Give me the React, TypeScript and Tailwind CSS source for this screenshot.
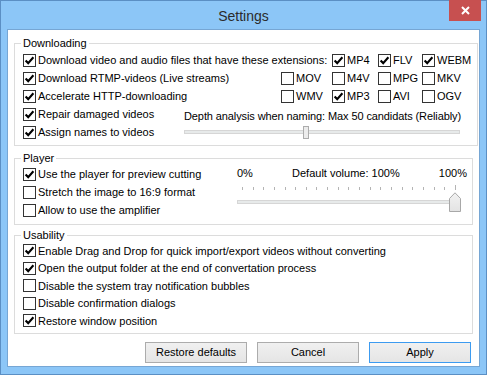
import React from "react";

function Box({ checked }: { checked?: boolean }) {
  return (
    <span className="w-[13px] h-[13px] shrink-0 border border-[#333333] bg-white flex items-center justify-center">
      {checked && (
        <svg width="11" height="11" viewBox="0 0 11 11">
          <path d="M1.6 5.4 L4.2 8.1 L9.4 2.2" stroke="#000" strokeWidth="2.1" fill="none" />
        </svg>
      )}
    </span>
  );
}

function Cb({ label, checked, className = "h-[18px]" }: { label: string; checked?: boolean; className?: string }) {
  return (
    <label className={`flex items-center gap-[2px] whitespace-nowrap ${className}`}>
      <Box checked={checked} />
      <span>{label}</span>
    </label>
  );
}

const TICKS = Array.from({ length: 21 }, (_, i) => i);

export default function App() {
  return (
    <div className="w-[487px] h-[375px] bg-[#8cc6f7] border border-[#5b8fc4] flex flex-col font-['Liberation_Sans',Arial,sans-serif] text-[11px] leading-[14px] text-black">
      {/* title bar */}
      <div className="relative h-[28px] flex items-center justify-center">
        <span className="text-[14px] text-[#2b2b2b] pt-[1px]">Settings</span>
        <div className="absolute top-[-1px] right-[5px] w-[32px] h-[21px] bg-[#c75050] flex items-center justify-center">
          <svg width="9" height="9" viewBox="0 0 9 9">
            <path d="M1 1 L8 8 M8 1 L1 8" stroke="#fff" strokeWidth="2" />
          </svg>
        </div>
      </div>

      {/* client */}
      <div className="mx-[6px] mb-[7px] flex-1 bg-white border border-[#76a6d4] flex flex-col">
        {/* Downloading */}
        <fieldset className="ml-[6px] mt-[6px] w-[464px] border border-[#dcdcdc] pl-[6px] pb-[4px]">
          <legend className="px-[2px] leading-[14px]">Downloading</legend>
          <div className="pl-[2px] pt-[1px]">
            <div className="grid grid-cols-[258px_51px_46px_44px_1fr]">
              <Cb className="h-[18px] col-span-2" checked label="Download video and audio files that have these extensions:" />
              <Cb checked label="MP4" />
              <Cb checked label="FLV" />
              <Cb checked label="WEBM" />
              <Cb checked label="Download RTMP-videos (Live streams)" />
              <Cb label="MOV" />
              <Cb label="M4V" />
              <Cb label="MPG" />
              <Cb label="MKV" />
              <Cb checked label="Accelerate HTTP-downloading" />
              <Cb label="WMV" />
              <Cb checked label="MP3" />
              <Cb label="AVI" />
              <Cb label="OGV" />
            </div>
            <div className="flex">
              <div className="w-[161px] flex flex-col">
                <Cb checked label="Repair damaged videos" />
                <Cb checked label="Assign names to videos" />
              </div>
              <div className="w-[276px] flex flex-col">
                <div className="h-[18px] flex items-center pt-[3px] whitespace-nowrap tracking-[-0.1px]">
                  Depth analysis when naming: Max 50 candidats (Reliably)
                </div>
                <div className="relative h-[18px] flex items-center">
                  <div className="w-full h-[4px] bg-[#e7eaea] border border-[#d6d6d6]" />
                  <div className="absolute left-[119px] top-[3px] w-[6px] h-[13px] bg-[#ececec] border border-[#acacac]" />
                </div>
              </div>
            </div>
          </div>
        </fieldset>

        {/* Player */}
        <fieldset className="ml-[6px] mt-[6px] w-[459px] border border-[#dcdcdc] pl-[6px] pb-[5px]">
          <legend className="px-[2px] leading-[13px]">Player</legend>
          <div className="pl-[2px] flex">
            <div className="flex flex-col">
              <Cb checked label="Use the player for preview cutting" />
              <Cb label="Stretch the image to 16:9 format" />
              <Cb label="Allow to use the amplifier" />
            </div>
            <div className="ml-auto mr-[5px] w-[230px] flex flex-col">
              <div className="h-[16px] flex items-center justify-between whitespace-nowrap">
                <span>0%</span>
                <span>Default volume: 100%</span>
                <span>100%</span>
              </div>
              <div className="relative mt-[6px] h-[24px]">
                <div className="flex justify-between pl-[5px] pr-[11px]">
                  {TICKS.map((i) => (
                    <span key={i} className={`w-px bg-[#b4b4b4] ${i === 20 ? "h-[5px] -mt-[2px]" : "h-[3px]"}`} />
                  ))}
                </div>
                <div className="mt-[10px] w-[219px] h-[4px] bg-[#e7eaea] border border-[#d6d6d6]" />
                <svg className="absolute left-[212px] top-[5px]" width="12" height="20" viewBox="0 0 12 20">
                  <defs>
                    <linearGradient id="th" x1="0" y1="0" x2="0" y2="1">
                      <stop offset="0" stopColor="#f2f2f2" />
                      <stop offset="1" stopColor="#e3e3e3" />
                    </linearGradient>
                  </defs>
                  <path d="M0.5 19.5 L0.5 6.5 L6 0.8 L11.5 6.5 L11.5 19.5 Z" fill="url(#th)" stroke="#a8a8a8" />
                </svg>
              </div>
            </div>
          </div>
        </fieldset>

        {/* Usability */}
        <fieldset className="ml-[6px] mt-[3px] w-[459px] border border-[#dcdcdc] pl-[6px] pb-[3px]">
          <legend className="px-[2px] leading-[14px]">Usability</legend>
          <div className="pl-[2px] flex flex-col">
            <Cb className="h-[17.5px]" checked label="Enable Drag and Drop for quick import/export videos without converting" />
            <Cb className="h-[17.5px]" checked label="Open the output folder at the end of convertation process" />
            <Cb className="h-[17.5px]" label="Disable the system tray notification bubbles" />
            <Cb className="h-[17.5px]" label="Disable confirmation dialogs" />
            <Cb className="h-[17.5px]" checked label="Restore window position" />
          </div>
        </fieldset>

        {/* buttons */}
        <div className="mt-[8px] pr-[8px] flex justify-end gap-[10px]">
          <button className="w-[102px] h-[21px] border border-[#acacac] bg-gradient-to-b from-[#f0f0f0] to-[#e5e5e5] text-black">
            Restore defaults
          </button>
          <button className="w-[102px] h-[21px] border border-[#acacac] bg-gradient-to-b from-[#f0f0f0] to-[#e5e5e5] text-black">
            Cancel
          </button>
          <button className="w-[102px] h-[21px] border border-[#3c9bf0] bg-gradient-to-b from-[#f0f0f0] to-[#e5e5e5] text-black">
            Apply
          </button>
        </div>
      </div>
    </div>
  );
}
